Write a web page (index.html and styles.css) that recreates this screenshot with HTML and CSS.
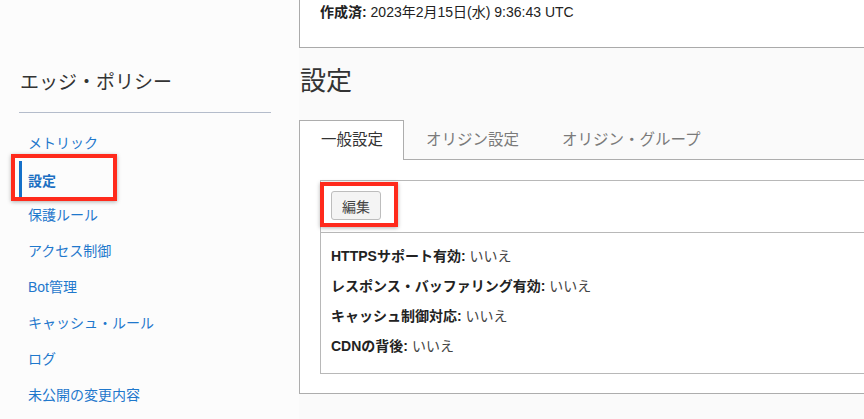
FILE: index.html
```html
<!DOCTYPE html>
<html lang="ja">
<head>
<meta charset="utf-8">
<title>エッジ・ポリシー 設定</title>
<link rel="stylesheet" href="styles.css">
</head>
<body>
<div class="page">
  <aside class="sidebar">
    <h2 class="side-title">エッジ・ポリシー</h2>
    <nav class="side-nav">
      <a class="nav-item" href="#">メトリック</a>
      <a class="nav-item active" href="#">設定</a>
      <a class="nav-item" href="#">保護ルール</a>
      <a class="nav-item" href="#">アクセス制御</a>
      <a class="nav-item" href="#">Bot管理</a>
      <a class="nav-item" href="#">キャッシュ・ルール</a>
      <a class="nav-item" href="#">ログ</a>
      <a class="nav-item" href="#">未公開の変更内容</a>
    </nav>
  </aside>
  <main class="main">
    <section class="info-card">
      <div class="info-line"><b>作成済:</b> 2023年2月15日(水) 9:36:43 UTC</div>
    </section>
    <h1 class="page-title">設定</h1>
    <div class="tabs">
      <div class="tab active">一般設定</div>
      <div class="tab">オリジン設定</div>
      <div class="tab">オリジン・グループ</div>
    </div>
    <div class="tab-panel">
      <div class="details">
        <div class="toolbar">
          <button class="btn" type="button">編集</button>
        </div>
        <div class="rows">
          <div class="row"><b>HTTPSサポート有効:</b> <span class="val">いいえ</span></div>
          <div class="row"><b>レスポンス・バッファリング有効:</b> <span class="val">いいえ</span></div>
          <div class="row"><b>キャッシュ制御対応:</b> <span class="val">いいえ</span></div>
          <div class="row"><b>CDNの背後:</b> <span class="val">いいえ</span></div>
        </div>
      </div>
    </div>
  </main>
</div>
<div class="highlight hl-nav"></div>
<div class="highlight hl-btn"></div>
</body>
</html>
```

FILE: styles.css
```css
html, body {
  margin: 0;
  padding: 0;
}
body {
  width: 864px;
  height: 419px;
  overflow: hidden;
  background: #fafafa;
  font-family: "Liberation Sans", "Noto Sans CJK JP", sans-serif;
  color: #333;
  position: relative;
}
.page {
  display: grid;
  grid-template-columns: 299px 620px;
}
.sidebar {
  padding-left: 19px;
  background: #fcfcfc;
  height: 419px;
}
.side-title {
  width: 252px;
  margin: 70px 0 0 0;
  padding: 0 0 16px 1px;
  font-size: 19px;
  line-height: 26px;
  font-weight: normal;
  color: #333;
  border-bottom: 1px solid #b4bccb;
  box-sizing: border-box;
}
.side-nav {
  display: flex;
  flex-direction: column;
  margin-top: 12px;
}
.nav-item {
  display: block;
  height: 36px;
  line-height: 36px;
  padding-left: 9px;
  font-size: 14px;
  color: #1f78cc;
  text-decoration: none;
  box-sizing: border-box;
}
.nav-item.active {
  font-weight: bold;
  color: #1b6fc2;
  border-left: 3px solid #1570c9;
  padding-left: 6px;
  line-height: 40px;
}
.main {
  min-width: 0;
}
.info-card {
  height: 48px;
  background: #fff;
  border-left: 1px solid #aaa;
  border-bottom: 1px solid #aaa;
  padding: 4px 0 0 20px;
  box-sizing: border-box;
}
.info-line {
  font-size: 14px;
  line-height: 16px;
  color: #222;
}
.info-line b {
  font-weight: bold;
}
.page-title {
  margin: 18px 0 24px 1px;
  font-size: 26px;
  line-height: 30px;
  font-weight: normal;
  color: #333;
}
.tabs {
  display: flex;
  align-items: flex-end;
  margin-bottom: -1px;
  position: relative;
  z-index: 1;
}
.tab {
  height: 40px;
  box-sizing: border-box;
  padding: 0 20px 0 21px;
  font-size: 15.5px;
  line-height: 38px;
  color: #7a7a7a;
  border: 1px solid transparent;
  border-bottom: 0;
}
.tab.active {
  background: #fff;
  color: #333;
  border-color: #adadad;
}
.tab-panel {
  background: #fff;
  border: 1px solid #adadad;
  padding: 20px 20px 19px 20px;
}
.details {
  border: 1px solid #b8b8b8;
  background: #fff;
}
.toolbar {
  padding: 10px 10px 12px 10px;
  border-bottom: 1px solid #b8b8b8;
}
.btn {
  display: block;
  height: 29px;
  padding: 0 10px;
  font-family: "Liberation Sans", "Noto Sans CJK JP", sans-serif;
  font-size: 14px;
  color: #444;
  background: #f4f4f4;
  border: 1px solid #bdbdbd;
  border-radius: 3px;
}
.rows {
  padding: 8px 10px 12px 10px;
}
.row {
  font-size: 14px;
  line-height: 30px;
  color: #222;
}
.row b {
  font-weight: bold;
}
.row .val {
  color: #444;
}
.highlight {
  position: absolute;
  border: 4px solid #ff2a1c;
  box-sizing: border-box;
  box-shadow: 0 1px 4px rgba(0, 0, 0, 0.3);
  pointer-events: none;
}
.hl-nav {
  left: 11px;
  top: 154px;
  width: 106px;
  height: 47px;
}
.hl-btn {
  left: 320px;
  top: 182px;
  width: 78px;
  height: 45px;
}
```
